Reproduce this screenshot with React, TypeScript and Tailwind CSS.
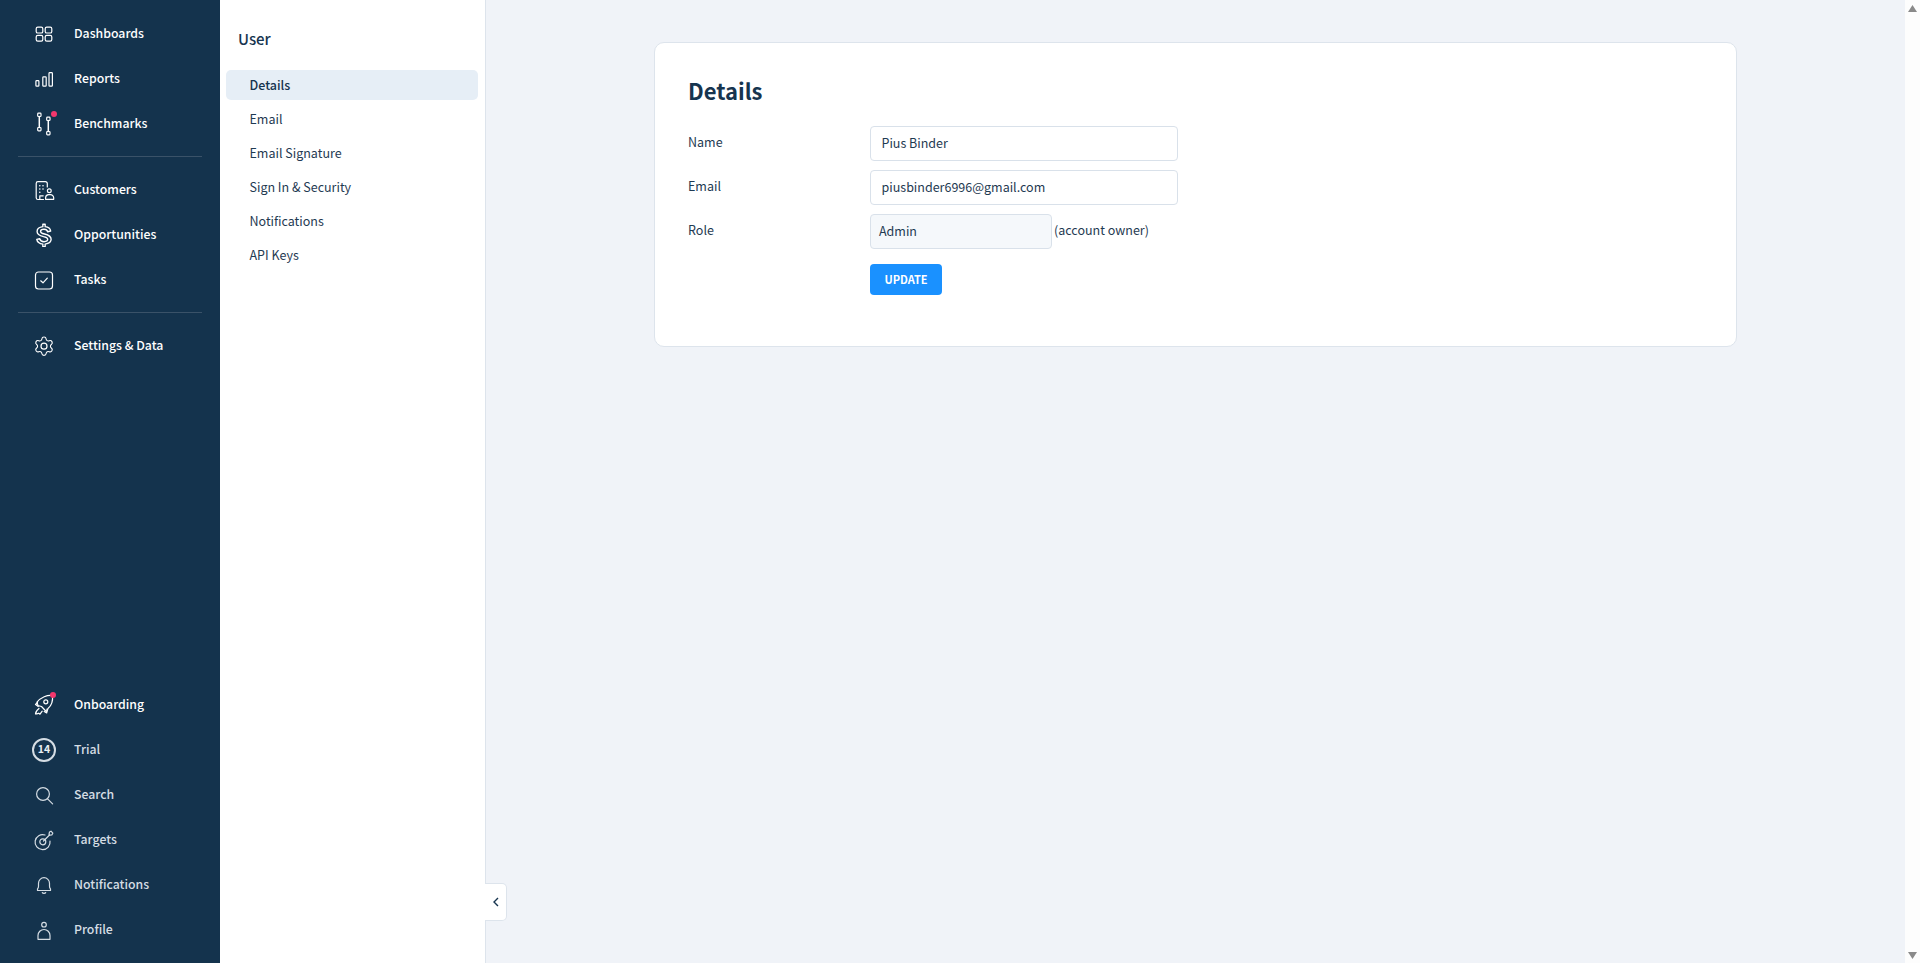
import React from "react";

const S = { fill: "none", stroke: "currentColor", strokeWidth: 1.2, strokeLinecap: "round", strokeLinejoin: "round" } as const;

function Svg({ children }: { children: React.ReactNode }) {
  return (
    <svg width="24" height="24" viewBox="0 0 24 24" {...S} className="shrink-0">
      {children}
    </svg>
  );
}

const Dashboards = () => (
  <Svg>
    <rect x="4.2" y="5.2" width="6.600" height="5.800" rx="1.600" />
    <rect x="13.200" y="5.2" width="6.600" height="5.800" rx="1.600" />
    <rect x="4.2" y="13.400" width="6.600" height="5.800" rx="1.600" />
    <rect x="13.200" y="13.400" width="6.600" height="5.800" rx="1.600" />
  </Svg>
);
const Reports = () => (
  <Svg>
    <rect x="3.900" y="13.600" width="3" height="5.600" rx="0.800" />
    <rect x="10.800" y="9.800" width="3.400" height="9.400" rx="0.800" />
    <rect x="17" y="5.600" width="3.400" height="13.600" rx="0.800" />
  </Svg>
);
const Benchmarks = () => (
  <Svg>
    <rect x="5.700" y="1.200" width="3.300" height="3.300" rx="0.800" />
    <path d="M7.300 4.500v11" strokeWidth="1.500" />
    <rect x="5.700" y="15.500" width="3.300" height="3.300" rx="0.800" />
    <rect x="14.700" y="5.200" width="3.300" height="3.300" rx="0.800" />
    <path d="M16.300 8.500v11" strokeWidth="1.500" />
    <rect x="14.700" y="19.500" width="3.300" height="3.300" rx="0.800" />
  </Svg>
);
const Customers = () => (
  <Svg>
    <path d="M11.500 21.500H6a1.800 1.800 0 0 1-1.800-1.800V5.500A1.800 1.800 0 0 1 6 3.700h7.500a1.800 1.800 0 0 1 1.800 1.800V9" />
    <path d="M7.800 21.500v-3.700h3.400" />
    <path d="M7.800 7.800h.01M11 7.800h.01M7.800 11h.01M11 11h.01M7.800 14.200h.01" strokeWidth="1.600" />
    <circle cx="17.300" cy="12.700" r="1.900" />
    <path d="M13.600 21.300v-1.600a3.200 3.200 0 0 1 3-3h1.600a3.200 3.200 0 0 1 3.500 3v1.600z" />
  </Svg>
);
const Dollar = () => (
  <Svg>
    <path
      transform="translate(12 12.500) scale(1.150 1.130) translate(-12 -12)"
      d="M11 2h2v2.200c2.600.3 4.500 1.700 4.800 3.800l-2.600.7C14.800 7.200 13.500 6.500 12 6.500c-1.700 0-3 .7-3 1.900 0 1.300 1.300 1.800 3.500 2.300 3.300.8 5.700 1.800 5.700 4.700 0 2.200-1.900 3.800-5.200 4.200V22h-2v-2.400c-2.800-.3-4.900-1.800-5.300-4.100l2.600-.6c.4 1.700 2 2.600 3.700 2.600 1.900 0 3.200-.8 3.200-2.100 0-1.400-1.300-1.900-3.600-2.400-3.300-.8-5.600-1.800-5.600-4.600C6 6 8 4.600 11 4.200z"
    />
  </Svg>
);
const Tasks = () => (
  <Svg>
    <rect x="3.500" y="4" width="17" height="17" rx="3" />
    <path d="M8.700 12.800l2.300 2 4.300-4.600" />
  </Svg>
);
const Gear = () => (
  <Svg>
    <path
      transform="translate(12 12.200) scale(0.920) translate(-12 -12)"
      d="M9.671 4.136a2.340 2.340 0 0 1 4.659 0 2.340 2.340 0 0 0 3.319 1.915 2.340 2.340 0 0 1 2.330 4.033 2.340 2.340 0 0 0 0 3.831 2.340 2.340 0 0 1-2.330 4.033 2.340 2.340 0 0 0-3.319 1.915 2.340 2.340 0 0 1-4.659 0 2.340 2.340 0 0 0-3.320-1.915 2.340 2.340 0 0 1-2.330-4.033 2.340 2.340 0 0 0 0-3.831A2.340 2.340 0 0 1 6.350 6.051a2.340 2.340 0 0 0 3.320-1.915"
    />
    <circle cx="12" cy="12.200" r="3" />
  </Svg>
);
const Rocket = () => (
  <Svg>
    <path d="M20.500 2.500c.5 5-1 10-4.500 13l-1.300 3.500-5.200-5.500-3.500-.8-1-3.500C8.500 4.500 15.500 1.500 20.500 2.500z" />
    <circle cx="13.800" cy="8.800" r="2" />
    <path d="M5.500 9.500L3.500 11.500l2.800 2M15 16l-.3 4-2.500-1.500" />
    <path d="M7 15.500c-2 1.500-3.500 3.500-3.500 5.500 1 0 2-.3 3.200-.8l1.300 1 2.200-3" />
  </Svg>
);
const Search = () => (
  <Svg>
    <circle cx="11" cy="11" r="6.400" />
    <path d="M15.600 15.800l5 5" />
  </Svg>
);
const Targets = () => (
  <Svg>
    <path d="M13 7a7.500 7.500 0 1 0 5 6" />
    <circle cx="10.800" cy="13.800" r="3" />
    <path d="M11.500 13l6-6" />
    <path d="M17 6.300l.5-2.300 1.500-.8 1.800 2-1 1.800-2.300.2z" />
  </Svg>
);
const Bell = () => (
  <Svg>
    <path d="M5.500 17.500v-1.600c.7-.7 1-1.500 1-2.600V10.200a5.500 5.500 0 0 1 11 0v3.100c0 1.100.3 1.900 1 2.600v1.600z" />
    <path d="M10.300 19.500c.4 1.200 3 1.200 3.400 0" />
  </Svg>
);
const Profile = () => (
  <Svg>
    <circle cx="12" cy="6.700" r="2.300" />
    <path d="M6 21.300v-3.800a6 6 0 0 1 12 0v3.800z" />
  </Svg>
);
const Trial = () => (
  <span className="flex h-6 w-6 shrink-0 items-center justify-center rounded-full border-2 border-[#d5dde4] text-[10.500px] leading-none font-bold text-[#e9eef2]">
    14
  </span>
);

function Dot({ className }: { className: string }) {
  return <span className={`absolute h-[6px] w-[6px] rounded-full bg-[#f4376d] ${className}`} />;
}

function Item({ icon, label, dim, dot }: { icon: React.ReactNode; label: string; dim?: boolean; dot?: string }) {
  return (
    <div className={`flex h-[45px] items-center pl-8 ${dim ? "text-[#d5dde4]" : "text-white"}`}>
      <span className="relative flex w-6 justify-center">
        {icon}
        {dot && <Dot className={dot} />}
      </span>
      <span className="ml-[18px] text-[12.300px] font-medium">{label}</span>
    </div>
  );
}

const Divider = () => <div className="mx-[18px] my-[10px] h-px bg-[#3a5268]" />;

const NavLinks = ["Email", "Email Signature", "Sign In & Security", "Notifications", "API Keys"];

function Field({ label, children }: { label: string; children: React.ReactNode }) {
  return (
    <div className="flex h-[35px] items-start">
      <span className="w-[182px] pt-[6px] text-[12.500px] leading-[20px] text-[#1f3a52]">{label}</span>
      {children}
    </div>
  );
}

export default function App() {
  return (
    <div
      className="relative flex h-[963px] w-[1920px] overflow-hidden bg-[#f0f3f8] text-[#16344f]"
      style={{ fontFamily: '"Noto Sans CJK SC", "Noto Sans", sans-serif' }}
    >
      <aside className="flex w-[220px] shrink-0 flex-col justify-between bg-[#14334d] pt-[11px] pb-[11px]">
        <div>
          <Item icon={<Dashboards />} label="Dashboards" />
          <Item icon={<Reports />} label="Reports" />
          <Item icon={<Benchmarks />} label="Benchmarks" dot="left-[19px] top-[-1px]" />
          <Divider />
          <Item icon={<Customers />} label="Customers" />
          <Item icon={<Dollar />} label="Opportunities" />
          <Item icon={<Tasks />} label="Tasks" />
          <Divider />
          <Item icon={<Gear />} label="Settings & Data" />
        </div>
        <div>
          <Item icon={<Rocket />} label="Onboarding" dot="left-[18px] top-[-1px]" />
          <Item icon={<Trial />} label="Trial" dim />
          <Item icon={<Search />} label="Search" dim />
          <Item icon={<Targets />} label="Targets" dim />
          <Item icon={<Bell />} label="Notifications" dim />
          <Item icon={<Profile />} label="Profile" dim />
        </div>
      </aside>

      <nav className="w-[266px] shrink-0 border-r border-[#dde4ec] bg-white pt-[27px] pr-[7px] pl-[6px]">
        <h2 className="pl-3 text-[15px] leading-6 font-medium">User</h2>
        <div className="mt-[19px] flex flex-col gap-1">
          <div className="flex h-[30px] items-center rounded-[5px] bg-[#e6eef6] pl-[23.500px] text-[12.500px] font-medium">Details</div>
          {NavLinks.map((l) => (
            <div key={l} className="flex h-[30px] items-center pl-[23.500px] text-[12.500px] text-[#1f3a52]">
              {l}
            </div>
          ))}
        </div>
      </nav>

      <main className="flex min-w-0 flex-1 justify-center pt-[42px]">
        <section className="h-[305px] w-[1083px] rounded-[10px] border border-[#dde4ec] bg-white pt-[30px] pl-[33px]">
          <h1 className="text-[22px] leading-[34px] font-semibold">Details</h1>
          <div className="mt-[19px] flex flex-col gap-[9px]">
            <Field label="Name">
              <div className="flex h-[35px] w-[308px] items-center rounded-[4px] border border-[#d9e1ea] pl-[10.500px] text-[12.500px] text-[#1f3a52]">Pius Binder</div>
            </Field>
            <Field label="Email">
              <div className="flex h-[35px] w-[308px] items-center rounded-[4px] border border-[#d9e1ea] pl-[10.500px] text-[12.500px] text-[#1f3a52]">piusbinder6996@gmail.com</div>
            </Field>
            <Field label="Role">
              <div className="flex h-[35px] w-[182px] items-center rounded-[4px] border border-[#d9e1ea] bg-[#f5f8fb] pl-2 text-[12.500px] text-[#1f3a52]">Admin</div>
              <span className="ml-[2px] pt-[6px] text-[12.500px] leading-[20px] text-[#1f3a52]">(account owner)</span>
            </Field>
          </div>
          <button className="mt-[15px] ml-[182px] flex h-[31px] w-[72px] items-center justify-center rounded-[4px] bg-[#1a91ff] pb-[1px] text-[11px] font-bold text-white">UPDATE</button>
        </section>
      </main>

      <div className="flex w-[15px] shrink-0 flex-col items-center justify-between bg-[#fdfdfd] pt-[5px] pb-[4px]">
        <svg width="9" height="7" viewBox="0 0 9 7"><path d="M4.500 0L9 7H0z" fill="#8a8a8a" /></svg>
        <svg width="9" height="7" viewBox="0 0 9 7"><path d="M0 0h9L4.500 7z" fill="#8a8a8a" /></svg>
      </div>

      <button className="absolute top-[883px] left-[485px] flex h-[38px] w-[22px] items-center justify-center rounded-r-[5px] border border-l-0 border-[#dde4ec] bg-white text-[#16344f]">
        <svg width="8" height="10" viewBox="0 0 8 10" fill="none" stroke="currentColor" strokeWidth="1.400"><path d="M6 1L2 5l4 4" /></svg>
      </button>
    </div>
  );
}
